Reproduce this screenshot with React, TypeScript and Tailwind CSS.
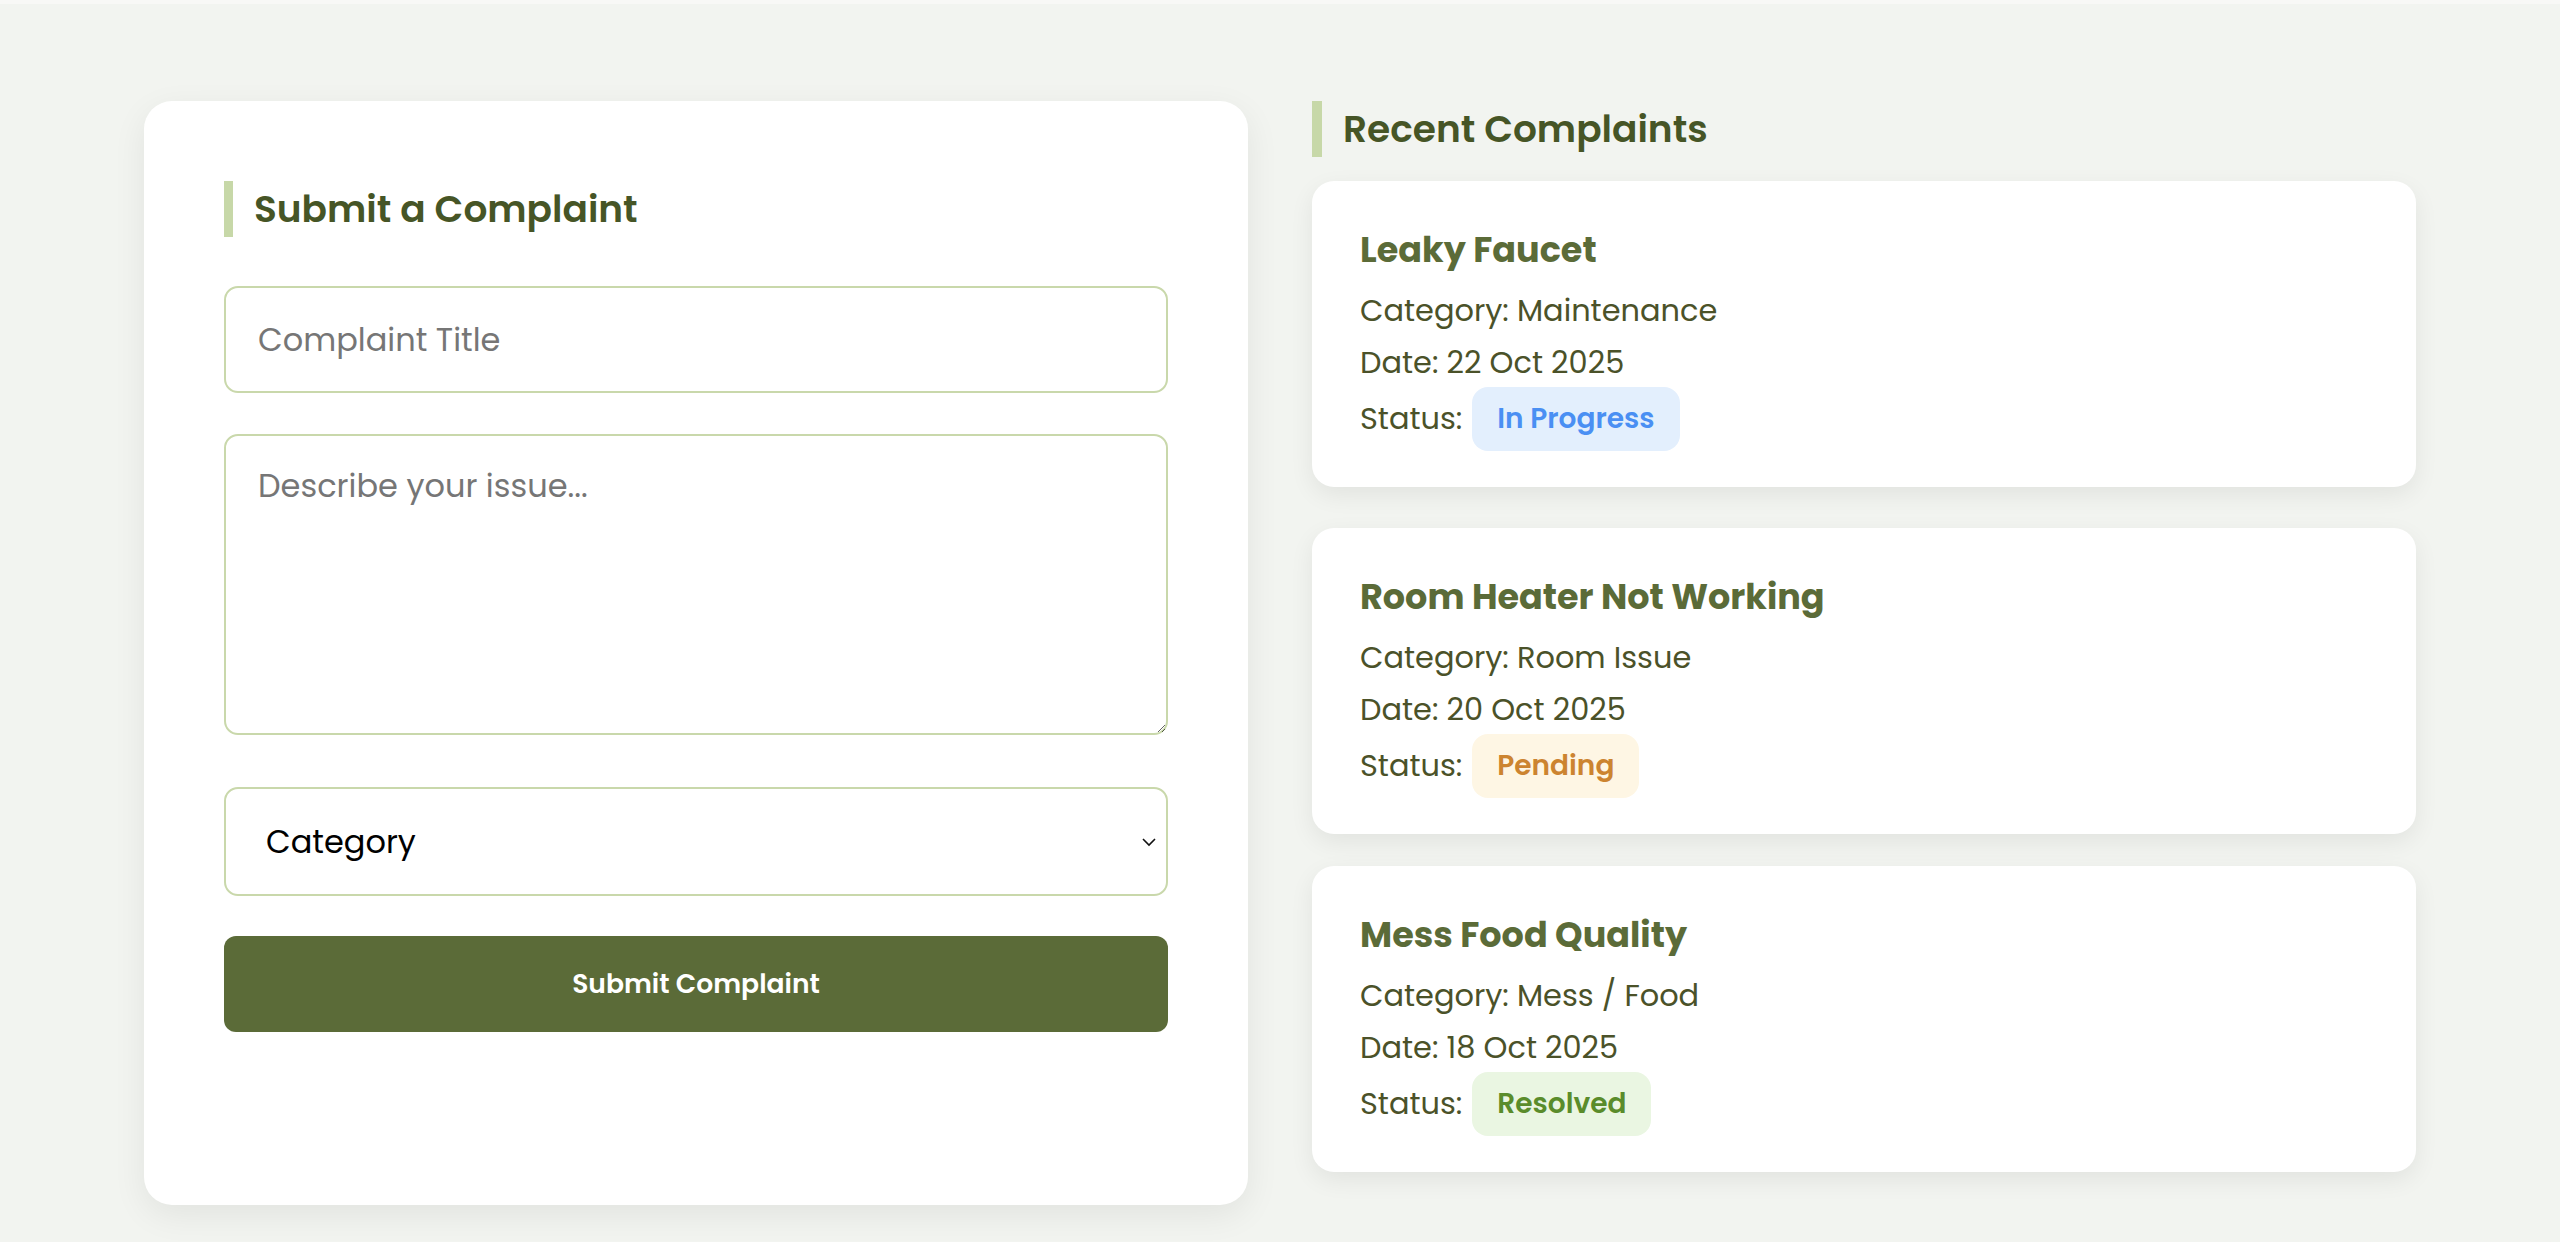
import React from 'react';

type Complaint = {
  title: string;
  category: string;
  date: string;
  status: 'In Progress' | 'Pending' | 'Resolved';
};

const complaints: Complaint[] = [
  { title: 'Leaky Faucet', category: 'Maintenance', date: '22 Oct 2025', status: 'In Progress' },
  { title: 'Room Heater Not Working', category: 'Room Issue', date: '20 Oct 2025', status: 'Pending' },
  { title: 'Mess Food Quality', category: 'Mess / Food', date: '18 Oct 2025', status: 'Resolved' },
];

const badgeStyles: Record<Complaint['status'], string> = {
  'In Progress': 'bg-[#e3effd] text-[#4a8ff3]',
  Pending: 'bg-[#fef6e4] text-[#cc8430]',
  Resolved: 'bg-[#eaf6e2] text-[#5a8c2b]',
};

const font = "font-['Poppins','Inter','Noto_Sans',sans-serif]";

const ComplaintCard: React.FC<{ c: Complaint; className?: string }> = ({ c, className }) => (
  <div
    className={`h-[306px] bg-white rounded-[22px] shadow-[0_8px_24px_rgba(0,0,0,0.07)] px-[48px] pt-[45px] ${className ?? ''}`}
  >
    <h3 className="text-[35px] leading-[48px] font-bold text-[#5b6b38]">{c.title}</h3>
    <p className="mt-[11px] text-[30.4px] leading-[52px] text-[#4b5229]">Category: {c.category}</p>
    <p className="text-[30.4px] leading-[52px] text-[#4b5229]">Date: {c.date}</p>
    <div className="-mt-[2px] flex items-center text-[30.4px] text-[#4b5229]">
      <span>Status:</span>
      <span
        className={`ml-[10px] h-[64px] px-[25px] rounded-[16px] flex items-center text-[28px] font-semibold ${badgeStyles[c.status]}`}
      >
        {c.status}
      </span>
    </div>
  </div>
);

export default function App() {
  return (
    <div className={`min-h-screen bg-[#f2f4f0] ${font}`}>
      <div className="h-[4px] bg-[#f8f8f6]" />
      <div className="px-[144px] pt-[97px] pb-[40px] grid grid-cols-2 gap-[64px] items-start">
        {/* Submit form */}
        <div className="bg-white rounded-[28px] shadow-[0_10px_34px_rgba(0,0,0,0.07)] px-[80px] pt-[80px] pb-[173px]">
          <h2 className="h-[56px] border-l-[9px] border-[#c7d8a8] pl-[21px] flex items-center text-[37.5px] font-semibold text-[#465526]">
            Submit a Complaint
          </h2>
          <input
            type="text"
            placeholder="Complaint Title"
            className="mt-[49px] block w-full h-[107px] border-2 border-[#c9d8ab] rounded-[14px] px-[32px] text-[32px] text-black placeholder:text-[#767676] outline-none"
          />
          <textarea
            placeholder="Describe your issue..."
            className="mt-[41px] block w-full h-[301px] border-2 border-[#c9d8ab] rounded-[14px] px-[32px] pt-[26px] text-[32px] text-black placeholder:text-[#767676] outline-none"
          />
          <div className="relative mt-[52px]">
            <select
              defaultValue=""
              className="block w-full h-[109px] appearance-none bg-white border-2 border-[#c9d8ab] rounded-[14px] pl-[40px] pr-[48px] text-[32px] text-black outline-none"
            >
              <option value="">Category</option>
              <option>Maintenance</option>
              <option>Room Issue</option>
              <option>Mess / Food</option>
            </select>
            <svg
              className="absolute right-[10px] top-1/2 -translate-y-1/2"
              width="18"
              height="14"
              viewBox="0 0 18 14"
              fill="none"
            >
              <path d="M3 4l6 6 6-6" stroke="#111" strokeWidth="1.6" />
            </svg>
          </div>
          <button className="mt-[40px] w-full h-[96px] rounded-[12px] bg-[#5b6b38] text-white text-[26.6px] font-semibold">
            Submit Complaint
          </button>
        </div>

        {/* Recent complaints */}
        <div>
          <h2 className="h-[56px] border-l-[10px] border-[#c7d8a8] pl-[21px] flex items-center text-[37.5px] font-semibold text-[#465526]">
            Recent Complaints
          </h2>
          <ComplaintCard c={complaints[0]} className="mt-[24px]" />
          <ComplaintCard c={complaints[1]} className="mt-[41px]" />
          <ComplaintCard c={complaints[2]} className="mt-[32px]" />
        </div>
      </div>
    </div>
  );
}
